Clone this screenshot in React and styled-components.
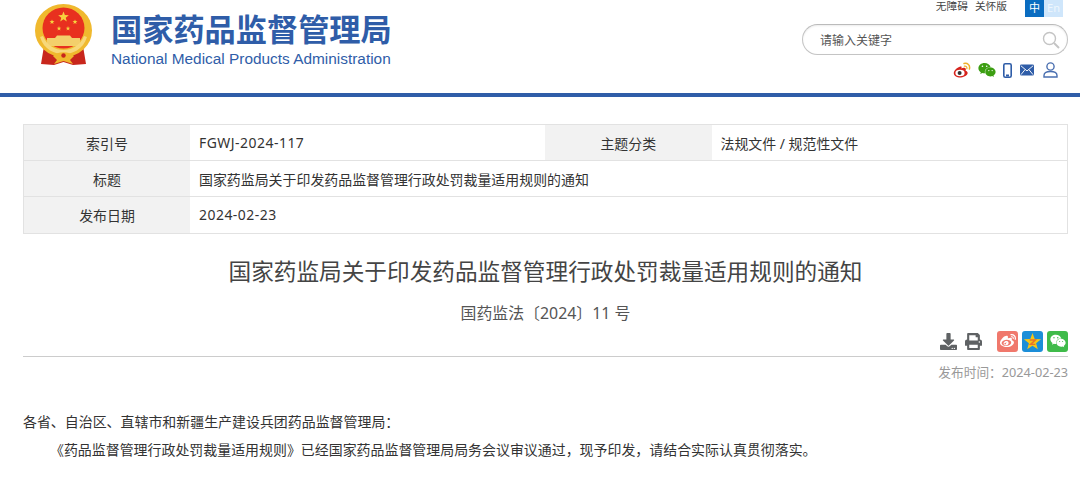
import React from 'react';
import styled, { createGlobalStyle } from 'styled-components';
import { FaWeibo, FaWeixin, FaDownload, FaPrint } from 'react-icons/fa';

const GlobalStyle = createGlobalStyle`
  html, body {
    margin: 0;
    padding: 0;
    background: #fff;
    overflow: hidden;
  }
  body {
    font-family: "Noto Sans", "Noto Sans CJK SC", sans-serif;
    color: #333;
  }
`;

const Header = styled.header`
  height: 93px;
  display: flex;
  justify-content: space-between;
  padding: 0 12px 0 35px;
  border-bottom: 4px solid #2f5da8;
`;

const Brand = styled.div`
  display: flex;
  align-items: flex-start;
  gap: 19px;
`;

const Emblem = styled.svg`
  width: 57px;
  height: 62px;
  margin-top: 4px;
`;

const BrandText = styled.div`
  display: flex;
  flex-direction: column;
`;

const BrandName = styled.div`
  margin-top: 10px;
  font-family: "Noto Sans CJK SC", sans-serif;
  font-size: 31.2px;
  line-height: 36px;
  font-weight: 700;
  color: #2f5da8;
  white-space: nowrap;
`;

const BrandEn = styled.div`
  margin-top: 4px;
  font-family: "Liberation Sans", sans-serif;
  font-size: 15.4px;
  line-height: 17px;
  color: #2f5da8;
  white-space: nowrap;
`;

const Tools = styled.div`
  width: 266px;
  display: flex;
  flex-direction: column;
  align-items: stretch;
`;

const TopLinks = styled.div`
  height: 17px;
  display: flex;
  justify-content: flex-end;
  align-items: flex-start;
  padding-right: 5px;
`;

const TopLink = styled.span`
  font-size: 10.7px;
  line-height: 13px;
  color: #444;
  margin-right: ${(p) => p.$gap}px;
`;

const Lang = styled.span`
  width: 19px;
  height: 17px;
  font-size: 11px;
  line-height: 15px;
  text-align: center;
  background: ${(p) => (p.$active ? '#0a6cc0' : '#cfe6fb')};
  color: ${(p) => (p.$active ? '#fff' : '#eef6fd')};
`;

const SearchBox = styled.div`
  margin-top: 7px;
  height: 29px;
  display: flex;
  align-items: center;
  justify-content: space-between;
  padding: 0 7px 0 17px;
  border: 1px solid #c4c4c4;
  border-top-color: #bbb;
  border-radius: 16px;
  box-shadow: inset 0 1px 2px rgba(0, 0, 0, 0.08);
`;

const SearchHint = styled.span`
  font-size: 12px;
  color: #555;
`;

const SocialRow = styled.div`
  margin-top: 7px;
  display: flex;
  justify-content: flex-end;
  align-items: center;
  padding-right: 10px;
  height: 16px;
`;

const SocialIcon = styled.svg`
  display: block;
  margin-left: ${(p) => p.$gap}px;
`;

const WechatSmall = styled(FaWeixin)`
  display: block;
  margin-left: 7px;
  font-size: 18px;
  color: #3c9e12;
`;

const Main = styled.main`
  padding: 27px 12px 0 23px;
`;

const MetaTable = styled.div`
  display: grid;
  grid-template-columns: 166px 355px 166.5px 1fr;
  grid-auto-rows: 35.2px;
  row-gap: 1px;
  background: #e2e2e2;
  border: 1px solid #e2e2e2;
`;

const MetaLabel = styled.div`
  display: flex;
  align-items: center;
  justify-content: center;
  background: #f2f2f2;
  font-size: 13.93px;
  color: #333;
`;

const MetaValue = styled.div`
  grid-column: ${(p) => (p.$wide ? 'span 3' : 'auto')};
  display: flex;
  align-items: center;
  padding-left: 9px;
  background: #fff;
  font-size: 13.93px;
  letter-spacing: ${(p) => (p.$latin ? '0.5px' : '0')};
  color: #333;
`;

const Title = styled.h1`
  margin: 22px 0 0;
  text-align: center;
  font-size: 22.65px;
  line-height: 32px;
  font-weight: 400;
  color: #444;
`;

const DocNo = styled.div`
  margin-top: 14px;
  text-align: center;
  font-size: 15.9px;
  line-height: 22px;
  color: #555;
`;

const ShareBar = styled.div`
  margin-top: 6px;
  height: 23px;
  padding-bottom: 3px;
  display: flex;
  justify-content: flex-end;
  align-items: center;
  gap: 4px;
  border-bottom: 1px solid #ccc;
`;

const ActionDownload = styled(FaDownload)`
  font-size: 17px;
  color: #5f6264;
`;

const ActionPrint = styled(FaPrint)`
  font-size: 17px;
  color: #5f6264;
  margin: 0 11px 0 4px;
`;

const ShareTile = styled.span`
  width: 21px;
  height: 21px;
  border-radius: 3px;
  display: flex;
  align-items: center;
  justify-content: center;
  background: ${(p) => p.$bg};
  color: #fff;
  font-size: 16px;
`;

const PubTime = styled.div`
  margin-top: 6px;
  text-align: right;
  font-size: 12.7px;
  line-height: 18px;
  color: #999;
`;

const Body = styled.p`
  margin: ${(p) => p.$top}px 0 0;
  padding-left: ${(p) => (p.$indent ? 27 : 0)}px;
  font-size: 13.95px;
  line-height: 20px;
  color: #333;
  white-space: nowrap;
`;

const Star = ({ cx, cy, r, fill }) => {
  const pts = [];
  for (let i = 0; i < 10; i++) {
    const rad = i % 2 ? r * 0.42 : r;
    const a = (Math.PI / 5) * i - Math.PI / 2;
    pts.push(`${cx + rad * Math.cos(a)},${cy + rad * Math.sin(a)}`);
  }
  return <polygon points={pts.join(' ')} fill={fill} />;
};

const App = () => {
  return (
    <>
      <GlobalStyle />
      <Header>
        <Brand>
          <Emblem viewBox="0 0 57 62">
            <path d="M9 42 L6 60 L19 61 L28.5 58 L38 61 L51 60 L48 42 Z" fill="#c8261c" />
            <ellipse cx="28.5" cy="26.5" rx="28.5" ry="26.5" fill="#f0b92e" />
            <ellipse cx="28.5" cy="24" rx="21" ry="20.5" fill="#e8301f" />
            <Star cx={28.5} cy={13} r={5.6} fill="#f7d23e" />
            <Star cx={17} cy={18} r={2.6} fill="#f7d23e" />
            <Star cx={40} cy={18} r={2.6} fill="#f7d23e" />
            <Star cx={24} cy={24.5} r={2.4} fill="#f7d23e" />
            <Star cx={33} cy={24.5} r={2.4} fill="#f7d23e" />
            <path d="M20 34 L22 31.5 H35 L37 34 Z" fill="#f3cf6b" />
            <rect x="12" y="34" width="33" height="8" fill="#f3cf6b" />
            <path d="M5 33 C9 46 20 50 28.5 50 C37 50 48 46 52 33 L49 32 C45 42 36 46 28.5 46 C21 46 12 42 8 32 Z" fill="#f7d87a" />
            <path d="M18 52 C22 47 35 47 39 52 L35 56 L38 60 L28.5 57 L19 60 L22 56 Z" fill="#f0b92e" />
            <circle cx="28.5" cy="51.5" r="2.2" fill="#c8261c" />
          </Emblem>
          <BrandText>
            <BrandName>国家药品监督管理局</BrandName>
            <BrandEn>National Medical Products Administration</BrandEn>
          </BrandText>
        </Brand>
        <Tools>
          <TopLinks>
            <TopLink $gap={7}>无障碍</TopLink>
            <TopLink $gap={18}>关怀版</TopLink>
            <Lang $active>中</Lang>
            <Lang>En</Lang>
          </TopLinks>
          <SearchBox>
            <SearchHint>请输入关键字</SearchHint>
            <svg width="18" height="18" viewBox="0 0 18 18" fill="none" stroke="#c4c4c4" strokeWidth="1.4">
              <circle cx="7.5" cy="7.5" r="6" />
              <path d="M12 12 L17 17" strokeWidth="2" />
            </svg>
          </SearchBox>
          <SocialRow>
            <SocialIcon width="18" height="16" viewBox="0 0 18 16">
              <path d="M7.5 4.5 C3.5 5.5 0.5 9 0.8 11.5 C1.2 14.6 5 15.8 8 15.5 C11.8 15.1 15 13 14.6 10.6 C14.4 9.4 13.3 9 12.6 8.7 C13.2 7.2 12.9 5.9 11.2 5.8 C10 5.7 9 6.2 8.4 6.5 C8.8 4.8 8.6 4.2 7.5 4.5 Z" fill="#d6231c" />
              <ellipse cx="7" cy="11" rx="4.6" ry="3.2" fill="#fff" />
              <circle cx="6.6" cy="11" r="2" fill="#333" />
              <path d="M11 1.5 C14.5 0.6 17.4 3.4 16.4 7" fill="none" stroke="#efb02c" strokeWidth="1.5" strokeLinecap="round" />
              <path d="M11.4 4.2 C13 3.8 14.3 5 13.9 6.6" fill="none" stroke="#efb02c" strokeWidth="1.3" strokeLinecap="round" />
            </SocialIcon>
            <WechatSmall />
            <SocialIcon $gap={7} width="9" height="15" viewBox="0 0 9 15">
              <rect x="0.8" y="0.8" width="7.4" height="13.4" rx="1.5" fill="none" stroke="#2f5da8" strokeWidth="1.6" />
              <rect x="3" y="11.5" width="3" height="2" fill="#2f5da8" />
            </SocialIcon>
            <SocialIcon $gap={8} width="14" height="12" viewBox="0 0 15 12">
              <rect width="15" height="12" rx="1.5" fill="#2f5da8" />
              <path d="M1 1.5 L7.5 7 L14 1.5 M1 11 L5.5 5.5 M14 11 L9.5 5.5" fill="none" stroke="#fff" strokeWidth="1" />
            </SocialIcon>
            <SocialIcon $gap={9} width="15" height="16" viewBox="0 0 15 16" fill="none" stroke="#4a6fb0" strokeWidth="1.4">
              <circle cx="7.5" cy="4.5" r="3.6" />
              <path d="M1 15 V13.5 C1 10.5 3.5 9.5 7.5 9.5 C11.5 9.5 14 10.5 14 13.5 V15 Z" />
            </SocialIcon>
          </SocialRow>
        </Tools>
      </Header>
      <Main>
        <MetaTable>
          <MetaLabel>索引号</MetaLabel>
          <MetaValue $latin>FGWJ-2024-117</MetaValue>
          <MetaLabel>主题分类</MetaLabel>
          <MetaValue>法规文件 / 规范性文件</MetaValue>
          <MetaLabel>标题</MetaLabel>
          <MetaValue $wide>国家药监局关于印发药品监督管理行政处罚裁量适用规则的通知</MetaValue>
          <MetaLabel>发布日期</MetaLabel>
          <MetaValue $wide $latin>2024-02-23</MetaValue>
        </MetaTable>
        <Title>国家药监局关于印发药品监督管理行政处罚裁量适用规则的通知</Title>
        <DocNo>国药监法〔2024〕11 号</DocNo>
        <ShareBar>
          <ActionDownload />
          <ActionPrint />
          <ShareTile $bg="#f0786c"><FaWeibo /></ShareTile>
          <ShareTile $bg="#1c8ed8">
            <svg width="19" height="19" viewBox="0 0 20 20">
              <Star cx={10} cy={10.5} r={9.5} fill="#f5c518" />
              <path d="M7 8.5 H13 L8 13 H13" fill="none" stroke="#e8722a" strokeWidth="1.5" />
            </svg>
          </ShareTile>
          <ShareTile $bg="#3fbb4a"><FaWeixin /></ShareTile>
        </ShareBar>
        <PubTime>发布时间：2024-02-23</PubTime>
        <Body $top={31}>各省、自治区、直辖市和新疆生产建设兵团药品监督管理局：</Body>
        <Body $top={8} $indent>《药品监督管理行政处罚裁量适用规则》已经国家药品监督管理局局务会议审议通过，现予印发，请结合实际认真贯彻落实。</Body>
      </Main>
    </>
  );
};

export default App;
